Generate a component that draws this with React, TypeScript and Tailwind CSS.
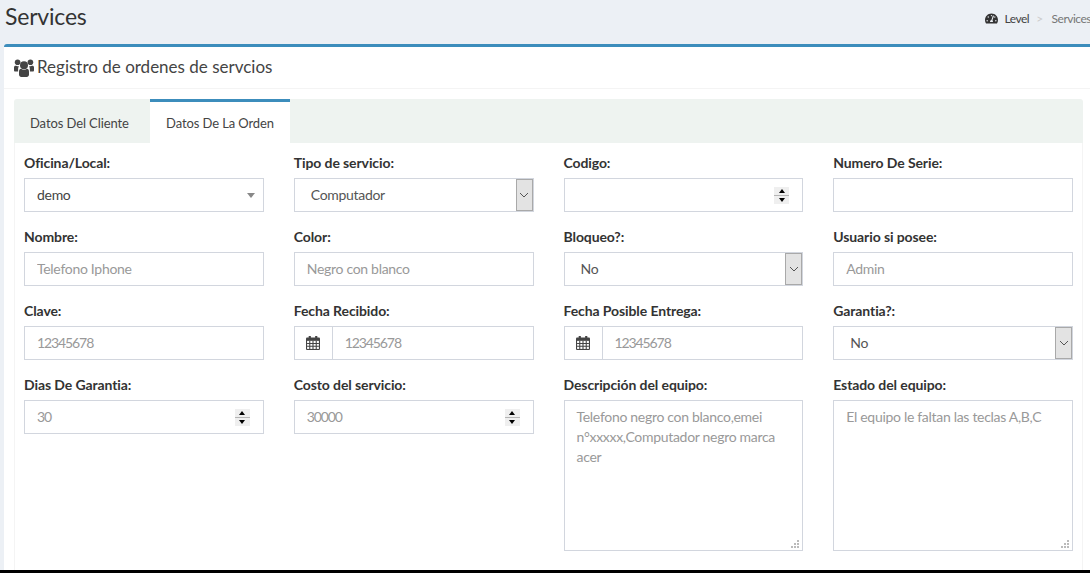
import React from 'react'
import { FaTachometerAlt } from 'react-icons/fa'

const labelCls = 'block h-[19px] mb-[6px] text-[14px] leading-[19px] font-bold tracking-[-0.1px] text-[#333]'
const inputCls = 'block w-full min-w-0 h-[34px] border border-[#d2d6de] bg-white px-3 pb-[2px] text-[14px] tracking-[-0.3px] text-[#555] placeholder:text-[#999] outline-none'

const Chevron = () => (
    <svg width="10" height="6" viewBox="0 0 10 6" fill="none" stroke="#555" strokeWidth="1"><path d="M1 1l4 4 4-4" /></svg>
)

const UsersIcon = () => (
    <svg width="20" height="18" viewBox="0 0 20 18" fill="#444" className="shrink-0">
        <circle cx="3.6" cy="3.2" r="2.8" />
        <circle cx="16.4" cy="3.2" r="2.8" />
        <path d="M0 8.5C0 7 1 6.6 2 6.8c1 .5 2 .5 3 .2-.6 1-.9 2.5-.9 3.9v1.6H1.2C.4 12.5 0 12 0 11.2z" />
        <path d="M20 8.5c0-1.500-1-1.900-2-1.700-1 .5-2 .5-3 .2.6 1 .9 2.500.9 3.900v1.600h2.900c.8 0 1.200-.5 1.200-1.300z" />
        <circle cx="10" cy="6.200" r="4" />
        <path d="M5 13c0-2 .8-3.200 2-3.200 1.800 1.200 4.200 1.200 6 0 1.200 0 2 1.200 2 3.200v2.600c0 1.500-1 2.400-2.300 2.400H7.300C6 18 5 17.100 5 15.600z" />
    </svg>
)

const CalendarIcon = () => (
    <svg width="14" height="14" viewBox="0 0 13 13" className="shrink-0">
        <rect x="0" y="1.500" width="13" height="11.500" rx="1" fill="#444" />
        <rect x="2.500" y="0" width="2" height="3.500" fill="#444" />
        <rect x="8.500" y="0" width="2" height="3.500" fill="#444" />
        <path d="M1 4.500h11v7.500H1z" fill="#fff" />
        <path d="M3.500 4.500v7.500M6.500 4.500v7.500M9.500 4.500v7.500M1 7h11M1 9.500h11" stroke="#444" strokeWidth="1" />
    </svg>
)

const Spinner = () => (
    <span className="flex h-[17px] w-[15px] shrink-0 flex-col bg-[#efefef]">
        <span className="flex h-[8px] items-center justify-center"><span className="h-0 w-0 border-x-[3.5px] border-b-[4px] border-x-transparent border-b-black" /></span>
        <span className="h-px bg-[#b5b5b5]" />
        <span className="flex h-[8px] items-center justify-center"><span className="h-0 w-0 border-x-[3.5px] border-t-[4px] border-x-transparent border-t-black" /></span>
    </span>
)

const TextField = ({ label, placeholder, digits }: { label: string; placeholder?: string; digits?: boolean }) => (
    <div>
        <label className={labelCls}>{label}</label>
        <input type="text" placeholder={placeholder} className={inputCls + (digits ? ' tracking-[-1.1px]' : '')} />
    </div>
)

const NumberField = ({ label, placeholder }: { label: string; placeholder?: string }) => (
    <div>
        <label className={labelCls}>{label}</label>
        <div className="flex h-[34px] items-center border border-[#d2d6de] bg-white pr-[13px]">
            <input type="text" placeholder={placeholder} className="min-w-0 flex-1 px-3 pb-[2px] text-[14px] tracking-[-1.1px] text-[#555] placeholder:text-[#999] outline-none" />
            <Spinner />
        </div>
    </div>
)

const SelectField = ({ label, value }: { label: string; value: string }) => (
    <div>
        <label className={labelCls}>{label}</label>
        <div className="flex h-[34px] items-stretch border border-[#d2d6de] bg-white text-[14px] tracking-[-0.3px] text-[#555]">
            <span className="flex-1 self-center pb-[2px] pl-4">{value}</span>
            <span className="flex w-[17px] items-center justify-center border border-[#a9a9a9] bg-[#e3e3e3]"><Chevron /></span>
        </div>
    </div>
)

const DateField = ({ label }: { label: string }) => (
    <div>
        <label className={labelCls}>{label}</label>
        <div className="flex h-[34px] border border-[#d2d6de] bg-white text-[14px]">
            <span className="flex w-[38px] items-center justify-center border-r border-[#d2d6de]"><CalendarIcon /></span>
            <input type="text" placeholder="12345678" className="min-w-0 flex-1 px-3 pb-[2px] tracking-[-1.1px] text-[#555] placeholder:text-[#999] outline-none" />
        </div>
    </div>
)

const AreaField = ({ label, placeholder }: { label: string; placeholder: string }) => (
    <div>
        <label className={labelCls}>{label}</label>
        <div className="relative">
            <textarea placeholder={placeholder} className="block h-[151px] w-full resize-none border border-[#d2d6de] bg-white px-3 py-[6px] text-[14px] leading-[20px] tracking-[-0.3px] text-[#555] placeholder:text-[#999] outline-none" />
            <svg width="8" height="8" viewBox="0 0 8 8" fill="#bbb" className="absolute right-[4px] bottom-[3px]">
                <rect x="6" y="0" width="2" height="2" />
                <rect x="3" y="3" width="2" height="2" />
                <rect x="6" y="3" width="2" height="2" />
                <rect x="0" y="6" width="2" height="2" />
                <rect x="3" y="6" width="2" height="2" />
                <rect x="6" y="6" width="2" height="2" />
            </svg>
        </div>
    </div>
)

export default function App() {
    return (
        <div className="flex h-[573px] w-[1090px] flex-col overflow-hidden border-b-[3px] border-black bg-[#ecf0f5] font-['Lato',sans-serif] text-[#333]">
            <div className="flex h-[44px] shrink-0 items-center justify-between pl-[5px]">
                <h1 className="mb-3 text-[23px] leading-[30px] tracking-[-0.2px] text-[#333]">Services</h1>
                <div className="-mr-[1px] mb-[7px] flex items-center text-[12px] tracking-[-0.5px] whitespace-nowrap">
                    <FaTachometerAlt size={13} className="mr-[7px] text-[#333]" />
                    <span className="text-[#444]">Level</span>
                    <span className="pr-[9px] pl-[7px] text-[#ccc]">&gt;</span>
                    <span className="text-[#777]">Services</span>
                </div>
            </div>
            <div className="ml-1 flex-1 rounded-tl-[3px] border-t-[3px] border-[#3c8dbc] bg-white">
                <div className="flex h-[42px] items-center gap-[3px] border-b border-[#f4f4f4] pl-[10px]">
                    <UsersIcon />
                    <h3 className="mb-px text-[17px] text-[#444]">Registro de ordenes de servcios</h3>
                </div>
                <div className="mt-[10px] ml-[10px] mr-[7px]">
                    <div className="flex h-[44px] rounded-t-[3px] bg-[#eef3f0] text-[13px] tracking-[-0.1px] text-[#444]">
                        <div className="flex w-[136px] items-center pt-[6px] pl-[16px]">Datos Del Cliente</div>
                        <div className="flex w-[140px] items-center justify-center border-t-[3px] border-[#3c8dbc] bg-white pt-[3px]">Datos De La Orden</div>
                    </div>
                    <div className="h-[427px] border-x border-[#f4f4f4] px-[9px] pt-[10px]">
                        <div className="grid grid-cols-4 gap-x-[30px] gap-y-[15px]">
                            <div>
                                <label className={labelCls}>Oficina/Local:</label>
                                <div className="flex h-[34px] items-center justify-between border border-[#d2d6de] bg-white pr-[8px] pl-3 text-[14px] tracking-[-0.3px] text-[#444]">
                                    <span className="pb-[2px]">demo</span>
                                    <span className="h-0 w-0 border-x-[4px] border-t-[5px] border-x-transparent border-t-[#888]" />
                                </div>
                            </div>
                            <SelectField label="Tipo de servicio:" value="Computador" />
                            <NumberField label="Codigo:" />
                            <TextField label="Numero De Serie:" />
                            <TextField label="Nombre:" placeholder="Telefono Iphone" />
                            <TextField label="Color:" placeholder="Negro con blanco" />
                            <SelectField label="Bloqueo?:" value="No" />
                            <TextField label="Usuario si posee:" placeholder="Admin" />
                            <TextField label="Clave:" placeholder="12345678" digits />
                            <DateField label="Fecha Recibido:" />
                            <DateField label="Fecha Posible Entrega:" />
                            <SelectField label="Garantia?:" value="No" />
                            <NumberField label="Dias De Garantia:" placeholder="30" />
                            <NumberField label="Costo del servicio:" placeholder="30000" />
                            <AreaField label="Descripción del equipo:" placeholder="Telefono negro con blanco,emei n°xxxxx,Computador negro marca acer" />
                            <AreaField label="Estado del equipo:" placeholder="El equipo le faltan las teclas A,B,C" />
                        </div>
                    </div>
                </div>
            </div>
        </div>
    )
}
